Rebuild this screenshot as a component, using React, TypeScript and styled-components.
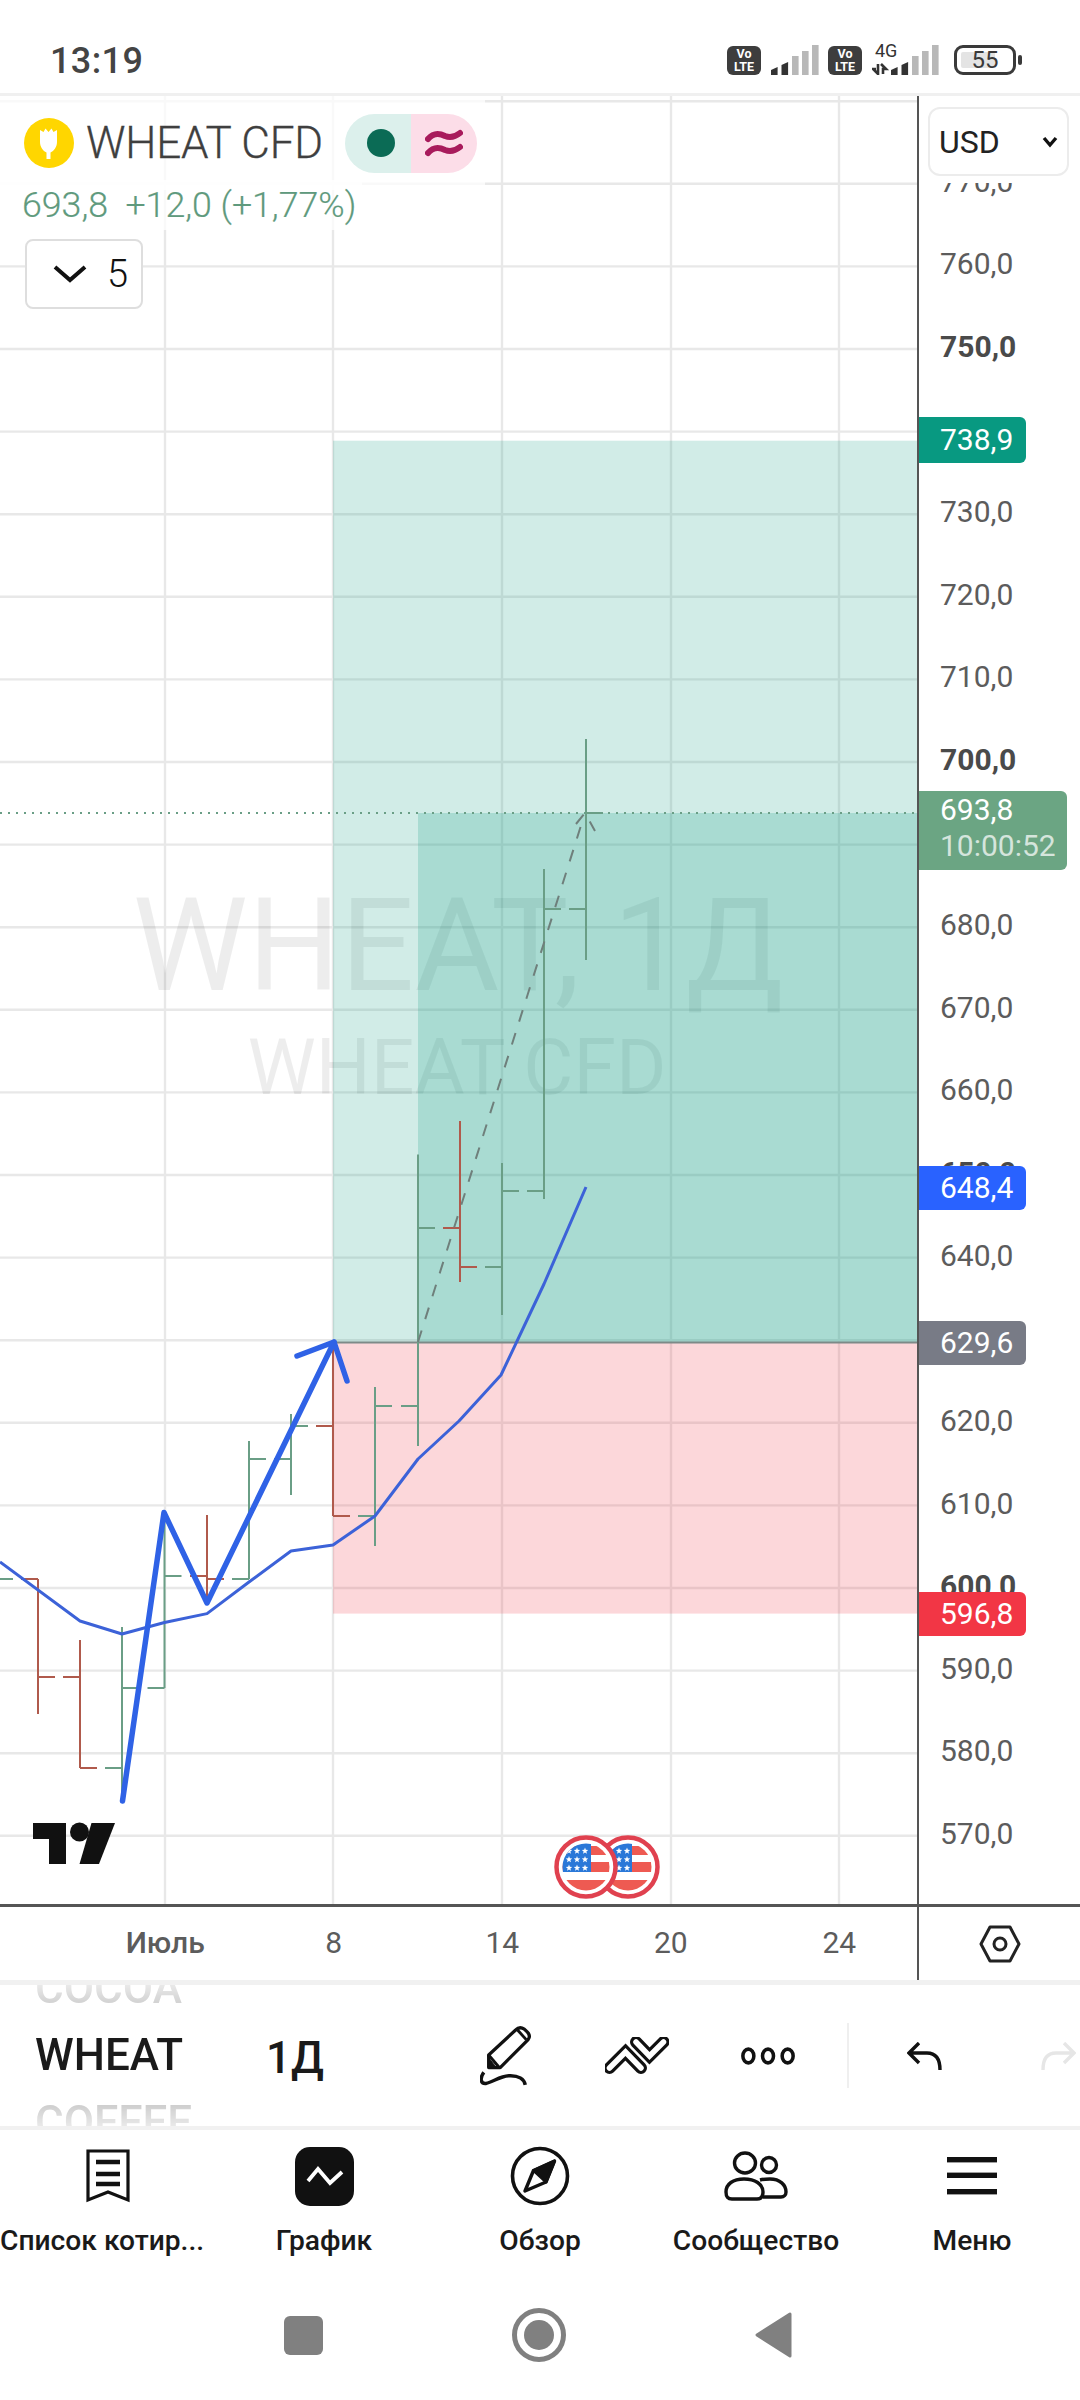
import React from "react";
import styled, { createGlobalStyle } from "styled-components";

const Global = createGlobalStyle`
  html, body { margin: 0; padding: 0; background: #fff; }
  body { font-family: Roboto, "Liberation Sans", sans-serif; }
`;

const AXIS_LINE = "#555";
const priceY = (p: number) => 762 + (700 - p) * 8.26;

/* ---------- page ---------- */
const Page = styled.div`
  width: 1080px;
  height: 2400px;
  display: flex;
  flex-direction: column;
  background: #fff;
  overflow: hidden;
`;

/* ---------- status bar ---------- */
const StatusBar = styled.div`
  flex: none;
  box-sizing: border-box;
  display: flex;
  align-items: flex-start;
  justify-content: space-between;
  padding: 45px 64px 0 50px;
  border-bottom: 3px solid #f0f0f0;
  height: 96px;
`;
const Clock = styled.div`
  font-size: 36px;
  line-height: 33px;
  font-weight: 500;
  color: #444;
  letter-spacing: 0.4px;
`;
const StatusIcons = styled.div`
  display: flex;
  align-items: flex-start;
`;
const VolteBadge = styled.div<{ $gap: number }>`
  width: 34px;
  height: 29px;
  margin-left: ${(p) => p.$gap}px;
  margin-top: 1px;
  border-radius: 6px;
  background: #3d3d3d;
  color: #fff;
  font-size: 12.5px;
  line-height: 12.5px;
  font-weight: 700;
  text-align: center;
  padding-top: 2px;
  box-sizing: border-box;
`;
const SignalWrap = styled.div<{ $gap: number }>`
  position: relative;
  margin-left: ${(p) => p.$gap}px;
  display: flex;
`;
const FourG = styled.span`
  position: absolute;
  left: 3px;
  top: -3px;
  font-size: 18px;
  line-height: 18px;
  color: #333;
`;
const Battery = styled.div`
  position: relative;
  width: 62px;
  height: 30px;
  margin-left: 15px;
  box-sizing: border-box;
  border: 3px solid #3a3a3a;
  border-radius: 9px;
  display: flex;
  align-items: center;
  justify-content: center;
  font-size: 24px;
  color: #3a3a3a;
  &::before {
    content: "";
    position: absolute;
    left: 4px;
    top: 4px;
    bottom: 4px;
    width: 34px;
    border-radius: 2px;
    background: #e4e4e4;
  }
  &::after {
    content: "";
    position: absolute;
    right: -9px;
    top: 7px;
    width: 4px;
    height: 10px;
    border-radius: 2px;
    background: #3a3a3a;
  }
`;
const BatteryValue = styled.span`
  position: relative;
`;

/* ---------- chart row ---------- */
const ChartRow = styled.div`
  height: 1808px;
  flex: none;
  display: flex;
`;
const Pane = styled.div`
  position: relative;
  width: 917px;
  height: 100%;
  flex: none;
`;
const ChartSvg = styled.svg`
  display: block;
  width: 917px;
  height: 1808px;
`;
const Watermark = styled.text<{ $size: number }>`
  font-family: Roboto, sans-serif;
  font-size: ${(p) => p.$size}px;
  fill: rgba(0, 0, 0, 0.072);
  text-anchor: middle;
`;
const Legend = styled.div`
  position: absolute;
  left: 0;
  top: 0;
  display: flex;
  flex-direction: column;
  align-items: flex-start;
`;
const LegendTitle = styled.div`
  display: flex;
  align-items: center;
  height: 94px;
  padding: 0 8px 0 24px;
  background: rgba(255, 255, 255, 0.72);
`;
const SymbolName = styled.span`
  width: 236px;
  margin-left: 12px;
  font-size: 44px;
  font-weight: 300;
  color: #3f3f3f;
  letter-spacing: -0.2px;
  white-space: nowrap;
  -webkit-text-stroke: 0.3px #3f3f3f;
`;
const StatusPill = styled.div`
  display: flex;
  margin-left: 23px;
  width: 132px;
  height: 59px;
  border-radius: 30px;
  overflow: hidden;
`;
const PillHalf = styled.div<{ $bg: string }>`
  flex: 1;
  display: flex;
  align-items: center;
  justify-content: center;
  background: ${(p) => p.$bg};
`;
const GreenDot = styled.span`
  width: 28px;
  height: 28px;
  border-radius: 50%;
  background: #0b6b55;
  margin-left: 5px;
`;
const PriceLine = styled.div`
  padding: 0 6px 0 22px;
  margin-top: -10px;
  height: 50px;
  line-height: 50px;
  font-size: 35.7px;
  font-weight: 300;
  color: #5f9a7d;
  white-space: pre;
  background: rgba(255, 255, 255, 0.72);
  -webkit-text-stroke: 0.2px #5f9a7d;
`;
const CollapseBox = styled.div`
  margin: 9px 0 0 25px;
  width: 118px;
  height: 70px;
  box-sizing: border-box;
  border: 2px solid #dedede;
  border-radius: 8px;
  background: #fff;
  display: flex;
  align-items: center;
  padding-left: 26px;
  gap: 20px;
  font-size: 38px;
  font-weight: 300;
  color: #111;
`;

/* ---------- price axis ---------- */
const Axis = styled.div`
  position: relative;
  flex: 1;
  border-left: 2px solid ${AXIS_LINE};
  box-sizing: border-box;
  overflow: hidden;
  padding-top: 43.7px;
`;
const AxisRow = styled.div<{ $bold?: boolean }>`
  height: 82.64px;
  display: flex;
  align-items: center;
  padding-left: 21px;
  font-size: 30px;
  font-weight: ${(p) => (p.$bold ? 700 : 400)};
  color: ${(p) => (p.$bold ? "#4a4a4a" : "#5c5c5c")};
`;
const CurrencyCover = styled.div`
  position: absolute;
  left: 0;
  right: 0;
  top: 0;
  height: 87px;
  background: #fff;
  padding: 11px 0 0 9px;
  box-sizing: border-box;
`;
const CurrencySelect = styled.div`
  width: 141px;
  height: 69px;
  box-sizing: border-box;
  border: 2px solid #ececec;
  border-radius: 12px;
  display: flex;
  align-items: center;
  justify-content: space-between;
  padding: 0 9px 0 9px;
  font-size: 32px;
  color: #222;
`;
const PriceTag = styled.div<{ $bg: string; $w: number; $h: number; $lift?: number }>`
  position: absolute;
  left: 0;
  width: ${(p) => p.$w}px;
  height: ${(p) => p.$h}px;
  box-sizing: border-box;
  padding-left: 21px;
  padding-bottom: ${(p) => p.$lift ?? 0}px;
  background: ${(p) => p.$bg};
  border-radius: 0 6px 6px 0;
  display: flex;
  flex-direction: column;
  justify-content: center;
  font-size: 30px;
  line-height: 36px;
  color: #fff;
`;
const TagTimer = styled.span`
  color: rgba(255, 255, 255, 0.72);
`;

/* ---------- time axis ---------- */
const TimeRow = styled.div`
  height: 76px;
  flex: none;
  display: flex;
  box-sizing: border-box;
  border-top: 3px solid ${AXIS_LINE};
`;
const TimeScale = styled.div`
  width: 917px;
  flex: none;
  display: flex;
  padding-left: 81px;
  box-sizing: border-box;
`;
const TimeCell = styled.div<{ $strong?: boolean }>`
  width: 168.5px;
  flex: none;
  display: flex;
  align-items: center;
  justify-content: center;
  padding-bottom: 2px;
  font-size: 30px;
  font-weight: ${(p) => (p.$strong ? 500 : 400)};
  color: #5c5c5c;
`;
const SettingsCell = styled.div`
  flex: 1;
  border-left: 2px solid ${AXIS_LINE};
  display: flex;
  align-items: center;
  justify-content: center;
`;

/* ---------- toolbar ---------- */
const Toolbar = styled.div`
  height: 150px;
  flex: none;
  box-sizing: border-box;
  border-top: 5px solid #f1f1f1;
  border-bottom: 4px solid #f1f1f1;
  display: flex;
  align-items: center;
  padding-left: 35px;
  overflow: hidden;
`;
const SymbolWheel = styled.div`
  width: 231px;
  height: 141px;
  flex: none;
  display: flex;
  flex-direction: column;
  justify-content: center;
  overflow: hidden;
  mask-image: linear-gradient(to bottom, rgba(0,0,0,.22) 0, rgba(0,0,0,.5) 16%, #000 30%, #000 70%, rgba(0,0,0,.5) 84%, rgba(0,0,0,.22) 100%);
`;
const WheelItem = styled.div<{ $active?: boolean }>`
  height: 67px;
  flex: none;
  line-height: 67px;
  font-size: 44px;
  font-weight: 500;
  color: ${(p) => (p.$active ? "#1a1a1a" : "#9a9a9a")};
`;
const Interval = styled.div`
  width: 214px;
  flex: none;
  font-size: 44px;
  font-weight: 500;
  color: #1a1a1a;
  margin-top: 4px;
`;
const ToolSlot = styled.div<{ $left: number; $w: number }>`
  margin-left: ${(p) => p.$left}px;
  width: ${(p) => p.$w}px;
  flex: none;
  display: flex;
  svg { display: block; }
`;
const ToolDivider = styled.div`
  margin-left: 51px;
  width: 2px;
  height: 65px;
  flex: none;
  background: #efefef;
`;

/* ---------- nav ---------- */
const BottomNav = styled.div`
  height: 160px;
  flex: none;
  display: grid;
  grid-template-columns: repeat(5, 216px);
  padding-top: 16px;
  box-sizing: border-box;
`;
const NavItem = styled.div`
  display: flex;
  flex-direction: column;
  align-items: center;
  min-width: 0;
`;
const NavIcon = styled.div`
  height: 60px;
  display: flex;
  align-items: center;
  justify-content: center;
  svg { display: block; }
`;
const NavLabel = styled.div<{ $start?: boolean }>`
  margin-top: 18px;
  line-height: 34px;
  font-size: 28.2px;
  font-weight: 500;
  color: #1a1a1a;
  white-space: nowrap;
  ${(p) => (p.$start ? `align-self: flex-start;` : "")}
`;

const SystemNav = styled.div`
  flex: 1;
  display: flex;
  align-items: center;
  padding: 0 0 20px 284px;
  gap: 188px;
  svg { display: block; }
`;

/* ---------- chart data ---------- */
type Bar = { x: number; h: number; l: number; o: number; c: number; up: boolean };
const bars: Bar[] = [
  { x: -4, h: 1500, l: 1579, o: 1500, c: 1579, up: true },
  { x: 38, h: 1579, l: 1714, o: 1579, c: 1677, up: false },
  { x: 80, h: 1640, l: 1768, o: 1677, c: 1768, up: false },
  { x: 122, h: 1627, l: 1802, o: 1768, c: 1688, up: true },
  { x: 164.5, h: 1511, l: 1688, o: 1688, c: 1576, up: true },
  { x: 207, h: 1515, l: 1604, o: 1576, c: 1579, up: false },
  { x: 249, h: 1441, l: 1579, o: 1579, c: 1459, up: true },
  { x: 291, h: 1414, l: 1495, o: 1459, c: 1426, up: true },
  { x: 333, h: 1341, l: 1516, o: 1426, c: 1516, up: false },
  { x: 375, h: 1387, l: 1546, o: 1516, c: 1406, up: true },
  { x: 418, h: 1154.5, l: 1446, o: 1406, c: 1228, up: true },
  { x: 460, h: 1121, l: 1282, o: 1228, c: 1267, up: false },
  { x: 502, h: 1163, l: 1315, o: 1267, c: 1191, up: true },
  { x: 544, h: 869, l: 1199, o: 1191, c: 909, up: true },
  { x: 586, h: 739, l: 960, o: 909, c: 813, up: true },
];
const ma = "0,1562 80,1621 122,1634 164.5,1622.5 207,1613.6 249,1582 291,1551 333,1545 375,1516 418,1459 459,1421 501,1375 544,1284 586,1187";
const gridPrices = Array.from({ length: 22 }, (_, i) => 780 - i * 10);
const gridX = [165, 333, 502, 671, 839];
const axisPrices = Array.from({ length: 21 }, (_, i) => 770 - i * 10);
const boldPrices = [750, 700, 650, 600];

const star = (cx: number, cy: number, r: number) => {
  const pts: string[] = [];
  for (let i = 0; i < 10; i++) {
    const rad = i % 2 === 0 ? r : r * 0.42;
    const a = -Math.PI / 2 + (i * Math.PI) / 5;
    pts.push(`${cx + rad * Math.cos(a)},${cy + rad * Math.sin(a)}`);
  }
  return pts.join(" ");
};

const Flag = ({ cx, id, cols, cantonEnd }: { cx: number; id: string; cols: number[]; cantonEnd: number }) => {
  const cy = 1867;
  return (
    <g>
      <circle cx={cx} cy={cy} r={29.5} fill="#fff" stroke="#e0414f" strokeWidth={4.5} />
      <clipPath id={id}>
        <circle cx={cx} cy={cy} r={23.5} />
      </clipPath>
      <g clipPath={`url(#${id})`}>
        <rect x={cx - 30} y={1846} width={60} height={9} fill="#ee5a52" />
        <rect x={cx - 30} y={1862} width={60} height={10} fill="#ee5a52" />
        <rect x={cx - 30} y={1880} width={60} height={11} fill="#ee5a52" />
        <rect x={cx - 30} y={1843} width={30 + cantonEnd} height={29} fill="#2a78d8" />
        {[1851, 1859.5, 1868].map((y) =>
          cols.map((dx) => (
            <polygon key={`${y}-${dx}`} points={star(cx + dx, y, 3.4)} fill="#fff" />
          ))
        )}
      </g>
    </g>
  );
};

const Chart = () => (
  <ChartSvg viewBox="0 96 917 1808">
    {gridPrices.map((p) => (
      <line key={p} x1={0} x2={917} y1={priceY(p)} y2={priceY(p)} stroke="#e8e8e8" strokeWidth={2.4} />
    ))}
    {gridX.map((x) => (
      <line key={x} x1={x} x2={x} y1={96} y2={1904} stroke="#e8e8e8" strokeWidth={2.4} />
    ))}
    <Watermark $size={130} x={458} y={990}>WHEAT, 1Д</Watermark>
    <Watermark $size={77} x={457} y={1094}>WHEAT CFD</Watermark>

    <rect x={333} y={440.7} width={584} height={901.3} fill="rgba(8,153,129,0.19)" />
    <rect x={418} y={813} width={499} height={529} fill="rgba(8,153,129,0.2)" />
    <rect x={333} y={1342} width={584} height={271.6} fill="rgba(242,54,69,0.2)" />
    <line x1={333} x2={917} y1={1342.5} y2={1342.5} stroke="#7d8a88" strokeWidth={2} />

    <line x1={0} x2={917} y1={813} y2={813} stroke="#6a9e86" strokeWidth={2} strokeDasharray="2 6" />

    {bars.map((b) => {
      const col = b.up ? "#6a9e86" : "#b05a4c";
      return (
        <g key={b.x} stroke={col} strokeWidth={2} fill="none">
          <line x1={b.x} x2={b.x} y1={b.h} y2={b.l} />
          <line x1={b.x - 17} x2={b.x} y1={b.o} y2={b.o} />
          <line x1={b.x} x2={b.x + 17} y1={b.c} y2={b.c} />
        </g>
      );
    })}

    <path
      d="M418 1342 L584 816 M576 824 L585 813 L595 831"
      fill="none"
      stroke="#6f7f7b"
      strokeWidth={2}
      strokeDasharray="12 12"
    />

    <polyline points={ma} fill="none" stroke="#3c62d8" strokeWidth={3} strokeLinejoin="round" />
    <polyline
      points="122.5,1801 164,1512.5 207,1603 334,1342"
      fill="none"
      stroke="#2f62e6"
      strokeWidth={5.5}
      strokeLinejoin="round"
      strokeLinecap="round"
    />
    <polyline
      points="297,1356 334,1342 347,1381"
      fill="none"
      stroke="#2f62e6"
      strokeWidth={5.5}
      strokeLinejoin="round"
      strokeLinecap="round"
    />

    <g fill="#111">
      <path d="M33 1823 H66 V1864 H49 V1839 H33 Z" />
      <circle cx={79.5} cy={1832} r={9.5} />
      <path d="M91.5 1823 H115 L99 1864 H79.5 Z" />
    </g>

    <Flag cx={628} id="flagB" cols={[-9, -1]} cantonEnd={4} />
    <Flag cx={586} id="flagA" cols={[-17, -9, -1]} cantonEnd={5} />
  </ChartSvg>
);

const Signal = ({ dark }: { dark: number }) => {
  const xs = [0, 10.5, 21, 31, 41];
  const tops = [22, 17, 11, 6, 0];
  return (
    <svg width={48} height={30} viewBox="0 0 48 30">
      {xs.map((x, i) => (
        <path
          key={x}
          d={`M${x} ${tops[i] + (i < 2 ? 3 : 0)} L${x + 6.6} ${tops[i]} V30 H${x} Z`}
          fill={i < dark ? "#333" : "#b8b8b8"}
        />
      ))}
    </svg>
  );
};

const tags = [
  { p: 738.9, bg: "#089981", text: "738,9", h: 46, top: 321 },
  { p: 648.4, bg: "#2962ff", text: "648,4", h: 44, top: 1070 },
  { p: 629.6, bg: "#787b86", text: "629,6", h: 44, top: 1225 },
  { p: 596.8, bg: "#f23645", text: "596,8", h: 44, top: 1496 },
];

const stroke = "#111";

export default function App() {
  return (
    <Page>
      <Global />
      <StatusBar>
        <Clock>13:19</Clock>
        <StatusIcons>
          <VolteBadge $gap={0}>Vo<br />LTE</VolteBadge>
          <SignalWrap $gap={10}><Signal dark={2} /></SignalWrap>
          <VolteBadge $gap={9}>Vo<br />LTE</VolteBadge>
          <SignalWrap $gap={10}>
            <FourG>4G</FourG>
            <svg width={19} height={30} viewBox="0 0 19 30">
              <path d="M6 19 V29 L1 24 H4 M9 19 L14 24 H11 V29" fill="none" stroke="#333" strokeWidth={2.6} />
            </svg>
            <Signal dark={2} />
          </SignalWrap>
          <Battery><BatteryValue>55</BatteryValue></Battery>
        </StatusIcons>
      </StatusBar>

      <ChartRow>
        <Pane>
          <Chart />
          <Legend>
            <LegendTitle>
              <svg width={50} height={50} viewBox="0 0 50 50">
                <circle cx={25} cy={25} r={25} fill="#ffd600" />
                <path
                  d="M16 12 L19.5 14 L21.5 10.5 L24.5 14 L27.5 10.5 L29.5 14 L33 12 V24 C33 29 30 33 26.5 34.5 V41 H22.5 V34.5 C19 33 16 29 16 24 Z"
                  fill="#fff"
                />
              </svg>
              <SymbolName>WHEAT CFD</SymbolName>
              <StatusPill>
                <PillHalf $bg="#dcf0ec"><GreenDot /></PillHalf>
                <PillHalf $bg="#fcdde8">
                  <svg width={38} height={28} viewBox="0 0 38 28">
                    <g fill="none" stroke="#a81b5c" strokeWidth={6} strokeLinecap="round">
                      <path d="M3 10 C9 3 16 5 20 7 C25 9 30 8 35 4" />
                      <path d="M3 24 C9 17 16 19 20 21 C25 23 30 22 35 18" />
                    </g>
                  </svg>
                </PillHalf>
              </StatusPill>
            </LegendTitle>
            <PriceLine>693,8  +12,0 (+1,77%)</PriceLine>
            <CollapseBox>
              <svg width={34} height={20} viewBox="0 0 34 20">
                <path d="M2 3 L17 16 L32 3" fill="none" stroke="#111" strokeWidth={4} />
              </svg>
              5
            </CollapseBox>
          </Legend>
        </Pane>
        <Axis>
          {axisPrices.map((p) => (
            <AxisRow key={p} $bold={boldPrices.includes(p)}>{p},0</AxisRow>
          ))}
          <CurrencyCover>
            <CurrencySelect>
              USD
              <svg width={16} height={12} viewBox="0 0 16 12">
                <path d="M2 2 L8 9 L14 2" fill="none" stroke="#111" strokeWidth={3.4} />
              </svg>
            </CurrencySelect>
          </CurrencyCover>
          {tags.map((t) => (
            <PriceTag key={t.p} $bg={t.bg} $w={107} $h={t.h} style={{ top: t.top }}>
              {t.text}
            </PriceTag>
          ))}
          <PriceTag $bg="#6ba583" $w={148} $h={79} $lift={5} style={{ top: 695 }}>
            693,8
            <TagTimer>10:00:52</TagTimer>
          </PriceTag>
        </Axis>
      </ChartRow>

      <TimeRow>
        <TimeScale>
          <TimeCell $strong>Июль</TimeCell>
          <TimeCell>8</TimeCell>
          <TimeCell>14</TimeCell>
          <TimeCell>20</TimeCell>
          <TimeCell>24</TimeCell>
        </TimeScale>
        <SettingsCell>
          <svg width={42} height={38} viewBox="0 0 42 38">
            <path d="M11 2 H31 L40 19 L31 36 H11 L2 19 Z" fill="none" stroke="#222" strokeWidth={3} strokeLinejoin="round" />
            <circle cx={21} cy={19} r={6} fill="none" stroke="#222" strokeWidth={3} />
          </svg>
        </SettingsCell>
      </TimeRow>

      <Toolbar>
        <SymbolWheel>
          <WheelItem>COCOA</WheelItem>
          <WheelItem $active>WHEAT</WheelItem>
          <WheelItem>COFFEE</WheelItem>
        </SymbolWheel>
        <Interval>1Д</Interval>
        <ToolSlot $left={0} $w={52}>
          <svg width={54} height={62} viewBox="0 0 54 62" fill="none" stroke={stroke}>
            <path d="M9 30 L37 4 Q41 0 46 3 L49 6 Q53 10 50 14 L21 43 H9 Z" strokeWidth={3.4} strokeLinejoin="round" />
            <path d="M39 4 L48 14" strokeWidth={3} />
            <path d="M9 30 L20 43" strokeWidth={3} />
            <path d="M9 33 V43 H17 Z" fill={stroke} strokeWidth={1} />
            <path d="M4 48 C0 53 0 60 6 59.5 C14 58 20 52 30 51.5 C40 51 46 55 47 61" strokeWidth={3.6} />
          </svg>
        </ToolSlot>
        <ToolSlot $left={73} $w={64}>
          <svg width={64} height={37} viewBox="0 0 64 37" fill="none" strokeLinecap="round" strokeLinejoin="miter">
            <path d="M4.5 31 L20.5 15 L36 31 M31 5 L44.5 19 L58.5 5" stroke={stroke} strokeWidth={12} />
            <path d="M4.5 31 L20.5 15 L36 31 M31 5 L44.5 19 L58.5 5" stroke="#fff" strokeWidth={5.5} />
          </svg>
        </ToolSlot>
        <ToolSlot $left={72} $w={55}>
          <svg width={56} height={20} viewBox="0 0 56 20" fill="none" stroke={stroke} strokeWidth={3.6}>
            <ellipse cx={7.5} cy={10} rx={5.6} ry={7} />
            <ellipse cx={27.5} cy={10} rx={5.6} ry={7} />
            <ellipse cx={47.5} cy={10} rx={5.6} ry={7} />
          </svg>
        </ToolSlot>
        <ToolDivider />
        <ToolSlot $left={58} $w={35}>
          <svg width={35} height={28} viewBox="0 0 35 28" fill="none" stroke={stroke} strokeWidth={3.4}>
            <path d="M12 1 L2 11 L12 21 M2 11 H20 C28 11 33 16 33 28" />
          </svg>
        </ToolSlot>
        <ToolSlot $left={99} $w={35}>
          <svg width={35} height={28} viewBox="0 0 35 28" fill="none" stroke="#e6e6e6" strokeWidth={3.4}>
            <path d="M23 1 L33 11 L23 21 M33 11 H15 C7 11 2 16 2 28" />
          </svg>
        </ToolSlot>
      </Toolbar>

      <BottomNav>
        <NavItem>
          <NavIcon>
            <svg width={44} height={55} viewBox="0 0 44 55" fill="none" stroke={stroke}>
              <path d="M2 2 H42 V51 L22 43 L2 51 Z" strokeWidth={3.2} />
              <path d="M10 13 H34 M10 25 H34 M10 35 H34" strokeWidth={4.4} />
            </svg>
          </NavIcon>
          <NavLabel $start>Список котир...</NavLabel>
        </NavItem>
        <NavItem>
          <NavIcon>
            <svg width={59} height={59} viewBox="0 0 59 59">
              <rect width={59} height={59} rx={15} fill="#111" />
              <path d="M13 34 L23 22 L35 36 L47 25" fill="none" stroke="#fff" strokeWidth={3.8} />
            </svg>
          </NavIcon>
          <NavLabel>График</NavLabel>
        </NavItem>
        <NavItem>
          <NavIcon>
            <svg width={60} height={60} viewBox="0 0 60 60">
              <circle cx={30} cy={30} r={27.5} fill="none" stroke={stroke} strokeWidth={3.6} />
              <path d="M44.5 15 L36 36 L15 45 L23.5 24.5 Z" fill="none" stroke={stroke} strokeWidth={3.4} strokeLinejoin="round" />
              <path d="M44.5 15 L36 36 L23.5 24.5 Z" fill={stroke} stroke={stroke} strokeWidth={3} strokeLinejoin="round" />
            </svg>
          </NavIcon>
          <NavLabel>Обзор</NavLabel>
        </NavItem>
        <NavItem>
          <NavIcon>
            <svg width={64} height={50} viewBox="0 0 64 50" fill="none" stroke={stroke} strokeWidth={3.4}>
              <ellipse cx={21} cy={12} rx={10.5} ry={10} />
              <circle cx={45} cy={14} r={7.5} />
              <path d="M2 41 C2 33 9 28 20 28 C31 28 39 33 39 41 C39 46 37 48 33 48 H8 C4 48 2 46 2 41 Z" />
              <path d="M36 29 C40 28 43 28 46 28 C56 28 62 34 62 41 C62 44 60 46 57 46 H39" />
            </svg>
          </NavIcon>
          <NavLabel>Сообщество</NavLabel>
        </NavItem>
        <NavItem>
          <NavIcon>
            <svg width={50} height={38} viewBox="0 0 50 38" fill={stroke}>
              <rect y={0} width={50} height={5.4} />
              <rect y={15.6} width={50} height={5.4} />
              <rect y={32} width={50} height={5.4} />
            </svg>
          </NavIcon>
          <NavLabel>Меню</NavLabel>
        </NavItem>
      </BottomNav>

      <SystemNav>
        <svg width={39} height={39} viewBox="0 0 39 39">
          <rect width={39} height={39} rx={6} fill="#808080" />
        </svg>
        <svg width={56} height={54} viewBox="0 0 56 54">
          <circle cx={28} cy={27} r={24.5} fill="none" stroke="#808080" strokeWidth={5} />
          <circle cx={28} cy={27} r={15} fill="#808080" />
        </svg>
        <svg width={38} height={48} viewBox="0 0 38 48">
          <path d="M35 3 V45 L2 24 Z" fill="#808080" stroke="#808080" strokeWidth={3} strokeLinejoin="round" />
        </svg>
      </SystemNav>
    </Page>
  );
}
